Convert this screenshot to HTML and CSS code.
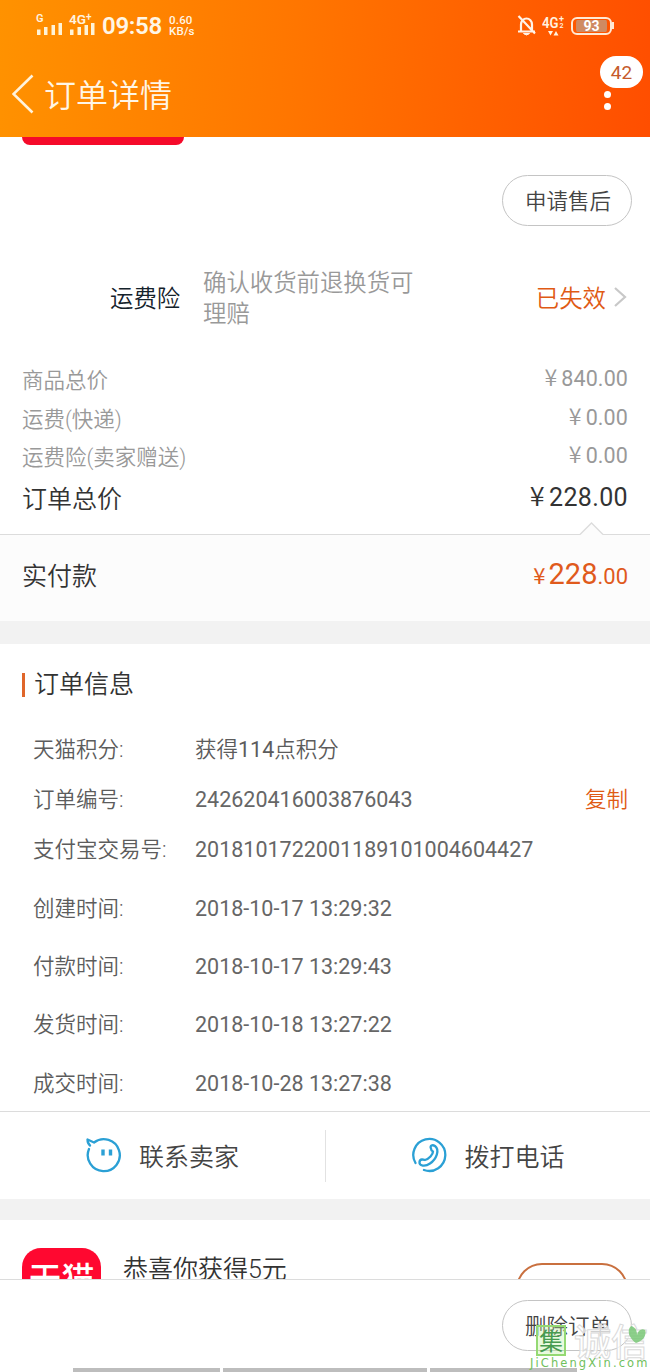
FILE: index.html
```html
<!DOCTYPE html>
<html lang="zh-CN">
<head>
<meta charset="utf-8">
<title>订单详情</title>
<link rel="stylesheet" href="styles.css">
</head>
<body>
<div class="screen">
  <header class="header">
    <div class="status">
      <svg class="signals" width="62" height="26" viewBox="0 0 62 26">
        <g fill="#fff3d6">
          <path d="M2 19.500h3.500v5.500h-3.500zM9 17h3.500v8h-3.500zM16.500 15h3.500v10h-3.500zM23.500 13h3.500v12h-3.500z"/>
          <path d="M35 19.500h3.500v5.500h-3.500zM42.500 17h3.500v8h-3.500zM49.500 15h3.500v10h-3.500zM56 13h3.500v12h-3.500z"/>
        </g>
        <g class="signal-text"><text x="1" y="12" font-size="11">G</text><text x="34" y="14" font-size="13" textLength="17" lengthAdjust="spacingAndGlyphs">4G</text><text x="51" y="10" font-size="10">+</text></g>
      </svg>
      <span class="clock">09:58</span>
      <span class="rate"><span>0.60</span><span>KB/s</span></span>
      <div class="status-right">
        <svg width="20" height="22" viewBox="0 0 20 22" fill="none" stroke="#fff3e8" stroke-width="2.200">
          <path d="M4 16V9.500C4 6 6.500 3.500 9.500 3.500S15 6 15 9.500V16M1 16.500H18M1.500 1L18 18.500"/>
          <path d="M6.500 18.500H12.500Q9.500 21.500 6.500 18.500Z" fill="#fff3e8" stroke-width="1"/>
        </svg>
        <svg class="network" width="25" height="24" viewBox="0 0 25 24" fill="#fff3e8">
          <text x="0" y="15" font-size="15.500" textLength="16.500" lengthAdjust="spacingAndGlyphs">4G</text><text x="17" y="9" font-size="9">+</text><text x="17.500" y="15" font-size="7">2</text>
          <path d="M6 18h5l-2.500 4.500zM11.500 22.500h5l-2.500-4.500z"/>
        </svg>
        <div class="battery">93</div><i class="battery-tip"></i>
      </div>
    </div>
    <div class="titlebar">
      <svg width="22" height="40" viewBox="0 0 22 40" fill="none" stroke="#fff3dc" stroke-width="2.600"><path d="M20.500 1.500L1.500 20L20.500 38.500"/></svg>
      <h1>订单详情</h1>
      <div class="more"><b class="badge">42</b><i></i><i></i></div>
    </div>
  </header>

  <main class="content">
    <div class="red-strip"></div>
    <div class="after-sale"><button class="pill">申请售后</button></div>
    <div class="insurance">
      <span class="ins-name">运费险</span>
      <span class="ins-desc">确认收货前退换货可理赔</span>
      <span class="ins-state">已失效</span>
      <svg width="14" height="22" viewBox="0 0 14 22" fill="none" stroke="#c8c8c8" stroke-width="2.200"><path d="M2 2L12 11L2 20"/></svg>
    </div>
    <section class="fees">
      <div class="fee"><span>商品总价</span><span class="amount"><em>¥</em>840.00</span></div>
      <div class="fee"><span>运费(快递)</span><span class="amount"><em>¥</em>0.00</span></div>
      <div class="fee"><span>运费险(卖家赠送)</span><span class="amount"><em>¥</em>0.00</span></div>
      <div class="fee total"><span>订单总价</span><span class="amount"><em>¥</em>228.00</span></div>
    </section>
    <section class="paid">
      <svg class="notch" width="26" height="15" viewBox="0 0 26 15"><path d="M1 13.500L12.500 2L24 13.500V15H1Z" fill="#fcfcfc"/><path d="M1 13.500L12.500 2L24 13.500" fill="none" stroke="#dcdcdc" stroke-width="1.300"/></svg>
      <span>实付款</span><span class="price"><em>¥</em><b>228</b>.00</span>
    </section>
    <div class="gap"></div>
    <section class="info">
      <h2>订单信息</h2>
      <dl>
        <div class="row short"><dt>天猫积分:</dt><dd class="points">获得<b>114</b>点积分</dd></div>
        <div class="row short"><dt>订单编号:</dt><dd>242620416003876043</dd><a class="copy">复制</a></div>
        <div class="row short"><dt>支付宝交易号:</dt><dd>2018101722001189101004604427</dd></div>
        <div class="row"><dt>创建时间:</dt><dd>2018-10-17 13:29:32</dd></div>
        <div class="row"><dt>付款时间:</dt><dd>2018-10-17 13:29:43</dd></div>
        <div class="row"><dt>发货时间:</dt><dd>2018-10-18 13:27:22</dd></div>
        <div class="row"><dt>成交时间:</dt><dd>2018-10-28 13:27:38</dd></div>
      </dl>
    </section>
    <section class="contact">
      <div class="contact-item">
        <svg width="36" height="36" viewBox="0 0 36 36" fill="none" stroke="#2ba0d5" stroke-width="2.300" stroke-linecap="round" stroke-linejoin="round"><path d="M4 12A16 16 0 1 0 9 5.500L2.500 2.500Q2.500 6.500 5 8.500"/><path d="M18 12.500v6M25.500 12.500v6" stroke-width="3.400" stroke-linecap="butt"/></svg>
        <span>联系卖家</span>
      </div>
      <div class="contact-item">
        <svg width="36" height="36" viewBox="0 0 36 36" fill="none" stroke="#2ba0d5" stroke-width="2.300" stroke-linecap="round" stroke-linejoin="round"><path d="M4.500 26A16 16 0 1 1 13 33"/><path d="M20 11.500C18.500 8.500 21.500 7.500 24 9C29 13 25.500 22 19 26.500C14 30 8 29 8.500 25C9 21.500 12.500 22.500 14 23C18 22 22 17.500 22 14.500Q20 13.500 20 11.500Z"/></svg>
        <span>拨打电话</span>
      </div>
    </section>
    <div class="gap small"></div>
    <section class="coupon">
      <div class="tmall">天猫</div>
      <div class="coupon-title">恭喜你获得5元</div>
      <div class="coupon-button"></div>
    </section>
  </main>

  <footer class="footer">
    <button class="pill">删除订单</button>
    <div class="home-bars"><i></i><i></i><i></i></div>
    <div class="watermark">
      <div class="mark-top"><span class="seal">集</span><span class="mark-name">诚信</span></div>
      <svg class="leaf" width="20" height="22" viewBox="0 0 20 22"><path d="M9 19C3 15-1 7 4 2C8 3 10 6 10 11C11 6 15 4 18 6C20 11 16 17 9 19Z" fill="#79c877" fill-opacity=".85"/></svg>
      <div class="mark-url">JiChengXin.com</div>
    </div>
  </footer>
</div>
</body>
</html>
```
FILE: styles.css
```css
* { box-sizing: border-box; }
body { margin: 0; background: #fff; font-family: Roboto, "Noto Sans CJK SC", sans-serif; font-weight: 350; color: #333; }
h1, h2, dl, dt, dd { margin: 0; font-weight: 350; }
em, i { font-style: normal; }
.screen { width: 650px; height: 1372px; overflow: hidden; display: flex; flex-direction: column; }

.header { height: 137px; flex: none; background: linear-gradient(95deg, #ff9200, #ff7600 45%, #ff4e00); color: #fff6e6; }
.status { height: 50px; display: flex; align-items: center; padding: 1px 36px 0 35px; }
.signals { margin-top: -6px; }
.signal-text, .network { fill: #fff3e0; font-family: Roboto, sans-serif; font-weight: 600; }
.clock { font-size: 24px; font-weight: 600; margin-left: 5px; width: 67px; line-height: 50px; letter-spacing: -.3px; }
.rate { display: flex; flex-direction: column; font-size: 11.500px; line-height: 11px; font-weight: 500; letter-spacing: .2px; }
.status-right { margin-left: auto; display: flex; align-items: center; }
.network { margin: -2px 4px 0 5px; }
.battery { width: 41px; height: 18px; border: 2px solid #ffe9d4; border-radius: 6px; background: #cf8a62; background-clip: content-box; padding: 1px 3px; font-size: 14px; line-height: 12px; font-weight: 700; text-align: center; color: #fff; }
.battery-tip { width: 2px; height: 7px; background: #ffe9d4; }
.titlebar { height: 87px; display: flex; align-items: center; padding: 0 7px 0 12px; }
.titlebar h1 { font-size: 32px; line-height: 82px; margin-left: 10px; padding-top: 5px; }
.more { margin-left: auto; align-self: flex-start; width: 43px; margin-top: 6px; display: flex; flex-direction: column; align-items: center; }
.badge { width: 43px; height: 32px; border-radius: 16px; background: #fff; color: #c55b2c; font-size: 19px; line-height: 34px; font-weight: 400; text-align: center; margin-bottom: 3px; }
.more i { width: 7px; height: 7px; margin: 0 29px 5px 0; border-radius: 50%; background: #fff; }
.more i { margin-right: 29px; }

.content { flex: none; height: 1142px; overflow: hidden; }
.red-strip { margin-left: 22px; width: 162px; height: 8px; background: #f50a2a; border-radius: 0 0 12px 12px; }
.after-sale { height: 105px; padding: 30px 18px 0; display: flex; justify-content: flex-end; }
.pill { width: 130px; height: 51px; padding: 2px 0 0 2px; border: 1px solid #c4c4c4; border-radius: 26px; background: transparent; font: 350 21.500px/47px Roboto, "Noto Sans CJK SC", sans-serif; color: #444; }
.insurance { height: 112px; display: flex; align-items: center; padding: 0 23px 18px 110px; font-size: 23.400px; }
.ins-name { color: #14222b; width: 93px; }
.ins-desc { width: 215px; line-height: 31px; color: #999; margin-top: 3px; }
.ins-state { margin-left: auto; margin-right: 7px; color: #e05a14; }
.fees { height: 172px; padding: 0 22px; }
.fee { height: 38.500px; line-height: 38.500px; display: flex; justify-content: space-between; font-size: 21.500px; color: #999; }
.amount { display: block; margin-top: -2px; letter-spacing: .1px; font-weight: 400; }
.amount em { margin-right: 4px; font-size: 1.080em; line-height: 1; font-family: "Noto Sans CJK SC", sans-serif; font-weight: 350; }
.total { height: 43px; line-height: 43px; font-size: 25px; color: #333; }
.total .amount { letter-spacing: .35px; }
.paid { position: relative; height: 87px; border-top: 1px solid #dcdcdc; background: #fcfcfc; display: flex; align-items: center; justify-content: space-between; padding: 0 22px 9px; font-size: 25px; }
.notch { position: absolute; right: 45px; top: -14px; }
.price { color: #e05a1c; font-size: 22px; font-weight: 400; }
.price em { margin-right: 3px; font-family: "Noto Sans CJK SC", sans-serif; }
.price b { font-size: 29px; font-weight: 400; }
.gap { height: 23px; background: #f2f2f2; }
.gap.small { height: 21px; }
.info { height: 467px; padding: 25px 22px 0; }
.info h2 { height: 31px; line-height: 31px; font-size: 25px; display: flex; align-items: center; }
.info h2::before { content: ""; width: 3px; height: 24px; margin-right: 9px; background: #e0662a; }
.info dl { padding: 24.500px 0 0 11px; }
.row { height: 58.300px; line-height: 58px; display: flex; font-size: 21.500px; color: #5c5c5c; }
.row.short { height: 50.400px; line-height: 50px; }
.row.short + .row:not(.short) { margin-top: 4px; }
.row dt { width: 162px; }
.row dd { font-weight: 400; color: #666; }
.row .points { font-weight: 350; color: #5c5c5c; }
.points b { font-weight: 400; }
.copy { margin-left: auto; color: #e05a14; }
.contact { height: 88px; border-top: 1px solid #dcdcdc; display: flex; align-items: center; }
.contact-item { flex: 1; height: 52px; display: flex; align-items: center; padding: 0 0 2px 85px; font-size: 25px; color: #444; }
.contact-item span { margin: 0 0 0 18px; }
.contact-item + .contact-item { border-left: 1px solid #e2e2e2; }
.coupon { height: 60px; display: flex; align-items: flex-start; padding: 28px 22px 0; overflow: hidden; }
.tmall { flex: none; width: 79px; height: 79px; border-radius: 19px; background: #ff0830; color: #fff; text-align: center; font: 500 33px/58px "Noto Sans CJK SC", sans-serif; }
.coupon-title { margin: 4px 0 0 22px; font-size: 25px; line-height: 36px; }
.coupon-button { margin: 15px 0 0 auto; width: 112px; height: 52px; border: 2px solid #c9703f; border-radius: 27px; }

.footer { position: relative; height: 93px; flex: none; border-top: 1px solid #dcdcdc; background: #fff; display: flex; flex-direction: column; align-items: flex-end; padding: 20px 18px 0; }
.home-bars { align-self: stretch; margin: auto 55px 0; display: grid; grid-template-columns: 147px 204px 147px; gap: 3px; }
.home-bars i { height: 4px; background: #bdbdbd; }
.watermark { position: absolute; right: 0; top: 44px; width: 120px; color: #70c05c; }
.mark-top { display: flex; gap: 8px; align-items: center; }
.seal { margin-left: 6px; width: 30px; height: 31px; border: 2px solid #94d973; background: rgba(190,240,160,.35); font: 400 24px/26px "Noto Sans CJK SC", sans-serif; text-align: center; color: #479b50; }
.mark-name { font: 500 37px/32px "Noto Sans CJK SC", sans-serif; color: rgba(255,255,255,.75); -webkit-text-stroke: 1px #dadada; }
.leaf { position: absolute; left: 97px; top: 0; }
.mark-url { font: 11.500px/14px "DejaVu Sans", sans-serif; letter-spacing: 2.100px; white-space: nowrap; }
```
